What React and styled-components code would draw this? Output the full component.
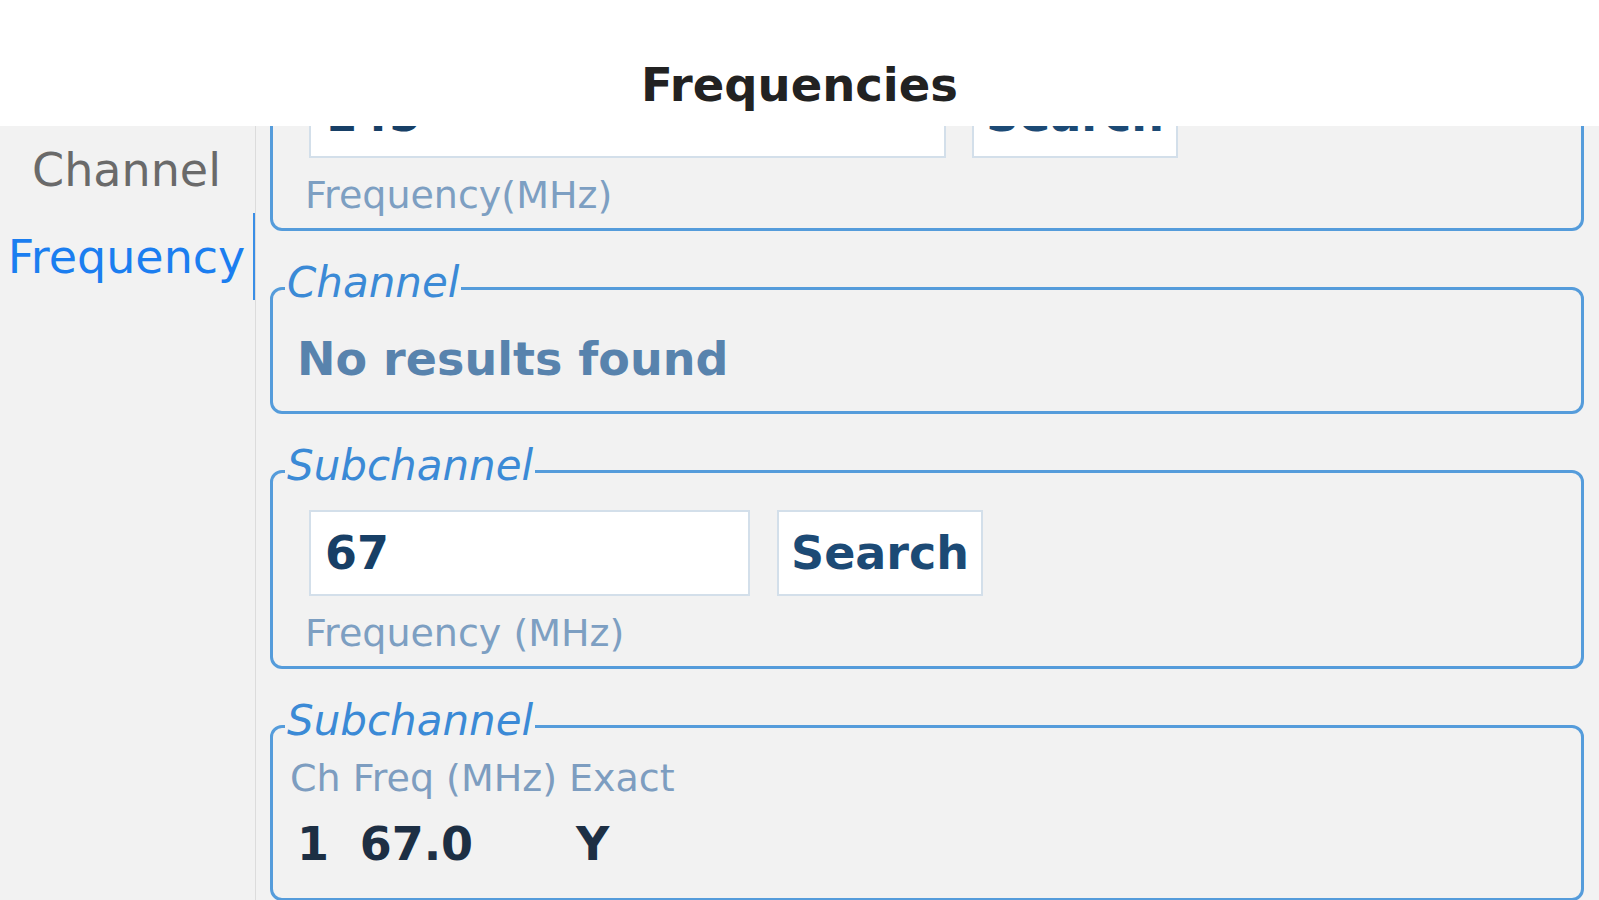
import React from 'react'
import styled, {createGlobalStyle} from 'styled-components'

const GlobalStyle = createGlobalStyle`
  html, body {
    margin: 0;
    padding: 0;
    background: #f2f2f2;
    font-family: "DejaVu Sans", "Liberation Sans", sans-serif;
  }
`

const Page = styled.div`
  height: 100vh;
  display: flex;
  flex-direction: column;
  overflow: hidden;
`

const Header = styled.header`
  height: 126px;
  flex-shrink: 0;
  box-sizing: border-box;
  padding-top: 58px;
  background: #ffffff;
  text-align: center;
`

const Title = styled.h1`
  margin: 0;
  font-size: 46.5px;
  font-weight: bold;
  color: #222222;
`

const Body = styled.div`
  flex: 1;
  display: flex;
  min-height: 0;
`

const Sidebar = styled.nav`
  width: 255px;
  flex-shrink: 0;
  border-right: 1px solid #dcdcdc;
`

const NavItem = styled.div`
  height: 87px;
  display: flex;
  align-items: center;
  justify-content: center;
  font-size: 46px;
  color: ${props => props.active ? '#1b7ef0' : '#6a6a6a'};
  border-right: 2px solid ${props => props.active ? '#3a8ee6' : 'transparent'};
`

const Content = styled.main`
  flex: 1;
  min-width: 0;
  overflow: hidden;
`

// content is scrolled down a bit, the first box sits under the header
const Scroller = styled.div`
  margin-top: -119.5px;
`

const Box = styled.fieldset`
  min-width: 0;
  margin: 0 15px 31px 14px;
  padding: 5px 17px 11px;
  border: 3px solid #559cdb;
  border-radius: 12px;
`

const Legend = styled.legend`
  margin-left: -5px;
  padding: 0 2px 11px;
  font-size: 42px;
  line-height: 42px;
  font-style: italic;
  color: #3b8ad6;
`

const NoResults = styled.p`
  margin: 12px 0 13.5px 7px;
  font-size: 46px;
  font-weight: bold;
  color: #5883ad;
`

const Form = styled.div`
  margin-top: 7.5px;
  padding-left: 12px;
`

const Row = styled.div`
  display: flex;
  gap: ${props => props.gap}px;
`

const Input = styled.input`
  width: ${props => props.w}px;
  height: 86px;
  margin: 0 0 0 7px;
  box-sizing: border-box;
  padding: 0 14px;
  border: 2px solid #d3dfea;
  background: #ffffff;
  font-family: inherit;
  font-size: 46px;
  font-weight: bold;
  color: #173f66;
  outline: none;
`

const Button = styled.button`
  height: 86px;
  box-sizing: border-box;
  padding: 0 12px;
  border: 2px solid #d3dfea;
  border-radius: 0;
  background: #ffffff;
  font-family: inherit;
  font-size: 46px;
  font-weight: bold;
  color: #1c4a75;
`

const Hint = styled.div`
  margin: 15px 0 0 3px;
  font-size: 38px;
  color: #7d9fc2;
`

const Table = styled.table`
  border-collapse: collapse;
  margin-top: -2.5px;
`

const Th = styled.th`
  padding: 0 12px 17px 0;
  text-align: left;
  font-size: 38px;
  font-weight: normal;
  color: #7d9dc0;
`

const Td = styled.td`
  padding: 0 12px 16px 7px;
  font-size: 46px;
  font-weight: bold;
  color: #1d2f44;
`

const SearchBox = ({legend, value, width, gap, hint}) => (
    <Box>
        <Legend>{legend}</Legend>
        <Form>
            <Row gap={gap}>
                <Input w={width} defaultValue={value}/>
                <Button>Search</Button>
            </Row>
            <Hint>{hint}</Hint>
        </Form>
    </Box>
)

const results = [
    {ch: 1, freq: '67.0', exact: 'Y'}
]

const App = () => {
    return (
        <>
            <GlobalStyle/>
            <Page>
                <Header>
                    <Title>Frequencies</Title>
                </Header>
                <Body>
                    <Sidebar>
                        <NavItem>Channel</NavItem>
                        <NavItem active>Frequency</NavItem>
                    </Sidebar>
                    <Content>
                        <Scroller>
                            <SearchBox legend="Channel" value="145" width={637} gap={26} hint="Frequency(MHz)"/>
                            <Box>
                                <Legend>Channel</Legend>
                                <NoResults>No results found</NoResults>
                            </Box>
                            <SearchBox legend="Subchannel" value="67" width={441} gap={27} hint="Frequency (MHz)"/>
                            <Box>
                                <Legend>Subchannel</Legend>
                                <Table>
                                    <thead>
                                        <tr>
                                            <Th>Ch</Th>
                                            <Th>Freq (MHz)</Th>
                                            <Th>Exact</Th>
                                        </tr>
                                    </thead>
                                    <tbody>
                                        {results.map(r => (
                                            <tr key={r.ch}>
                                                <Td>{r.ch}</Td>
                                                <Td>{r.freq}</Td>
                                                <Td>{r.exact}</Td>
                                            </tr>
                                        ))}
                                    </tbody>
                                </Table>
                            </Box>
                        </Scroller>
                    </Content>
                </Body>
            </Page>
        </>
    )
}

export default App
